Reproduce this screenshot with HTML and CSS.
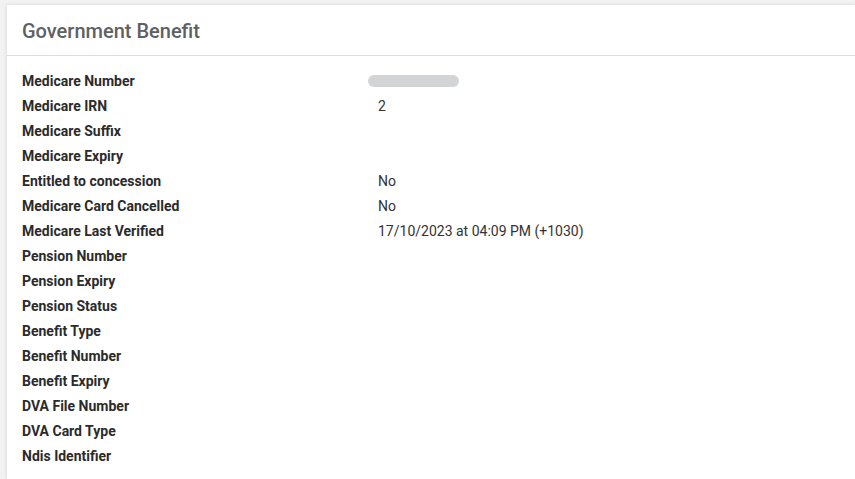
FILE: index.html
```html
<!DOCTYPE html>
<html>
<head>
<meta charset="utf-8">
<link rel="stylesheet" href="styles.css">
</head>
<body>
<div class="card">
  <div class="card-header"><h2 class="title">Government Benefit</h2></div>
  <div class="card-body">
    <dl class="fields">
      <div class="row"><dt>Medicare Number</dt><dd><span class="redact"></span></dd></div>
      <div class="row"><dt>Medicare IRN</dt><dd>2</dd></div>
      <div class="row"><dt>Medicare Suffix</dt><dd></dd></div>
      <div class="row"><dt>Medicare Expiry</dt><dd></dd></div>
      <div class="row"><dt>Entitled to concession</dt><dd>No</dd></div>
      <div class="row"><dt>Medicare Card Cancelled</dt><dd>No</dd></div>
      <div class="row"><dt>Medicare Last Verified</dt><dd>17/10/2023 at 04:09 PM (+1030)</dd></div>
      <div class="row"><dt>Pension Number</dt><dd></dd></div>
      <div class="row"><dt>Pension Expiry</dt><dd></dd></div>
      <div class="row"><dt>Pension Status</dt><dd></dd></div>
      <div class="row"><dt>Benefit Type</dt><dd></dd></div>
      <div class="row"><dt>Benefit Number</dt><dd></dd></div>
      <div class="row"><dt>Benefit Expiry</dt><dd></dd></div>
      <div class="row"><dt>DVA File Number</dt><dd></dd></div>
      <div class="row"><dt>DVA Card Type</dt><dd></dd></div>
      <div class="row"><dt>Ndis Identifier</dt><dd></dd></div>
    </dl>
  </div>
</div>
</body>
</html>
```
FILE: styles.css
```css
html, body {
  margin: 0;
  padding: 0;
  background: #f2f2f2;
  font-family: Roboto, "Liberation Sans", sans-serif;
  overflow: hidden;
  height: 479px;
}
body {
  padding: 5px 0 0 7px;
  box-sizing: border-box;
}
.card {
  background: #fff;
  box-shadow: 0 0 4px rgba(0,0,0,0.12);
  height: 100%;
}
.card-header {
  height: 50px;
  border-bottom: 1px solid #dcdcdc;
  padding: 0 15px;
  display: flex;
  align-items: center;
}
.title {
  margin: 0;
  font-size: 20px;
  font-weight: 500;
  color: #5f6061;
  padding-top: 1px;
}
.card-body {
  padding: 12px 15px;
}
.fields {
  margin: 0;
}
.row {
  display: grid;
  grid-template-columns: 356px 1fr;
  height: 25px;
  align-items: center;
}
dt {
  font-size: 14px;
  font-weight: 700;
  color: #2b2b2b;
}
dd {
  margin: 0;
  font-size: 14px;
  color: #333;
}
.redact {
  display: block;
  width: 91px;
  height: 12px;
  border-radius: 6px;
  background: #d3d4d6;
  margin-left: -10px;
}
```
